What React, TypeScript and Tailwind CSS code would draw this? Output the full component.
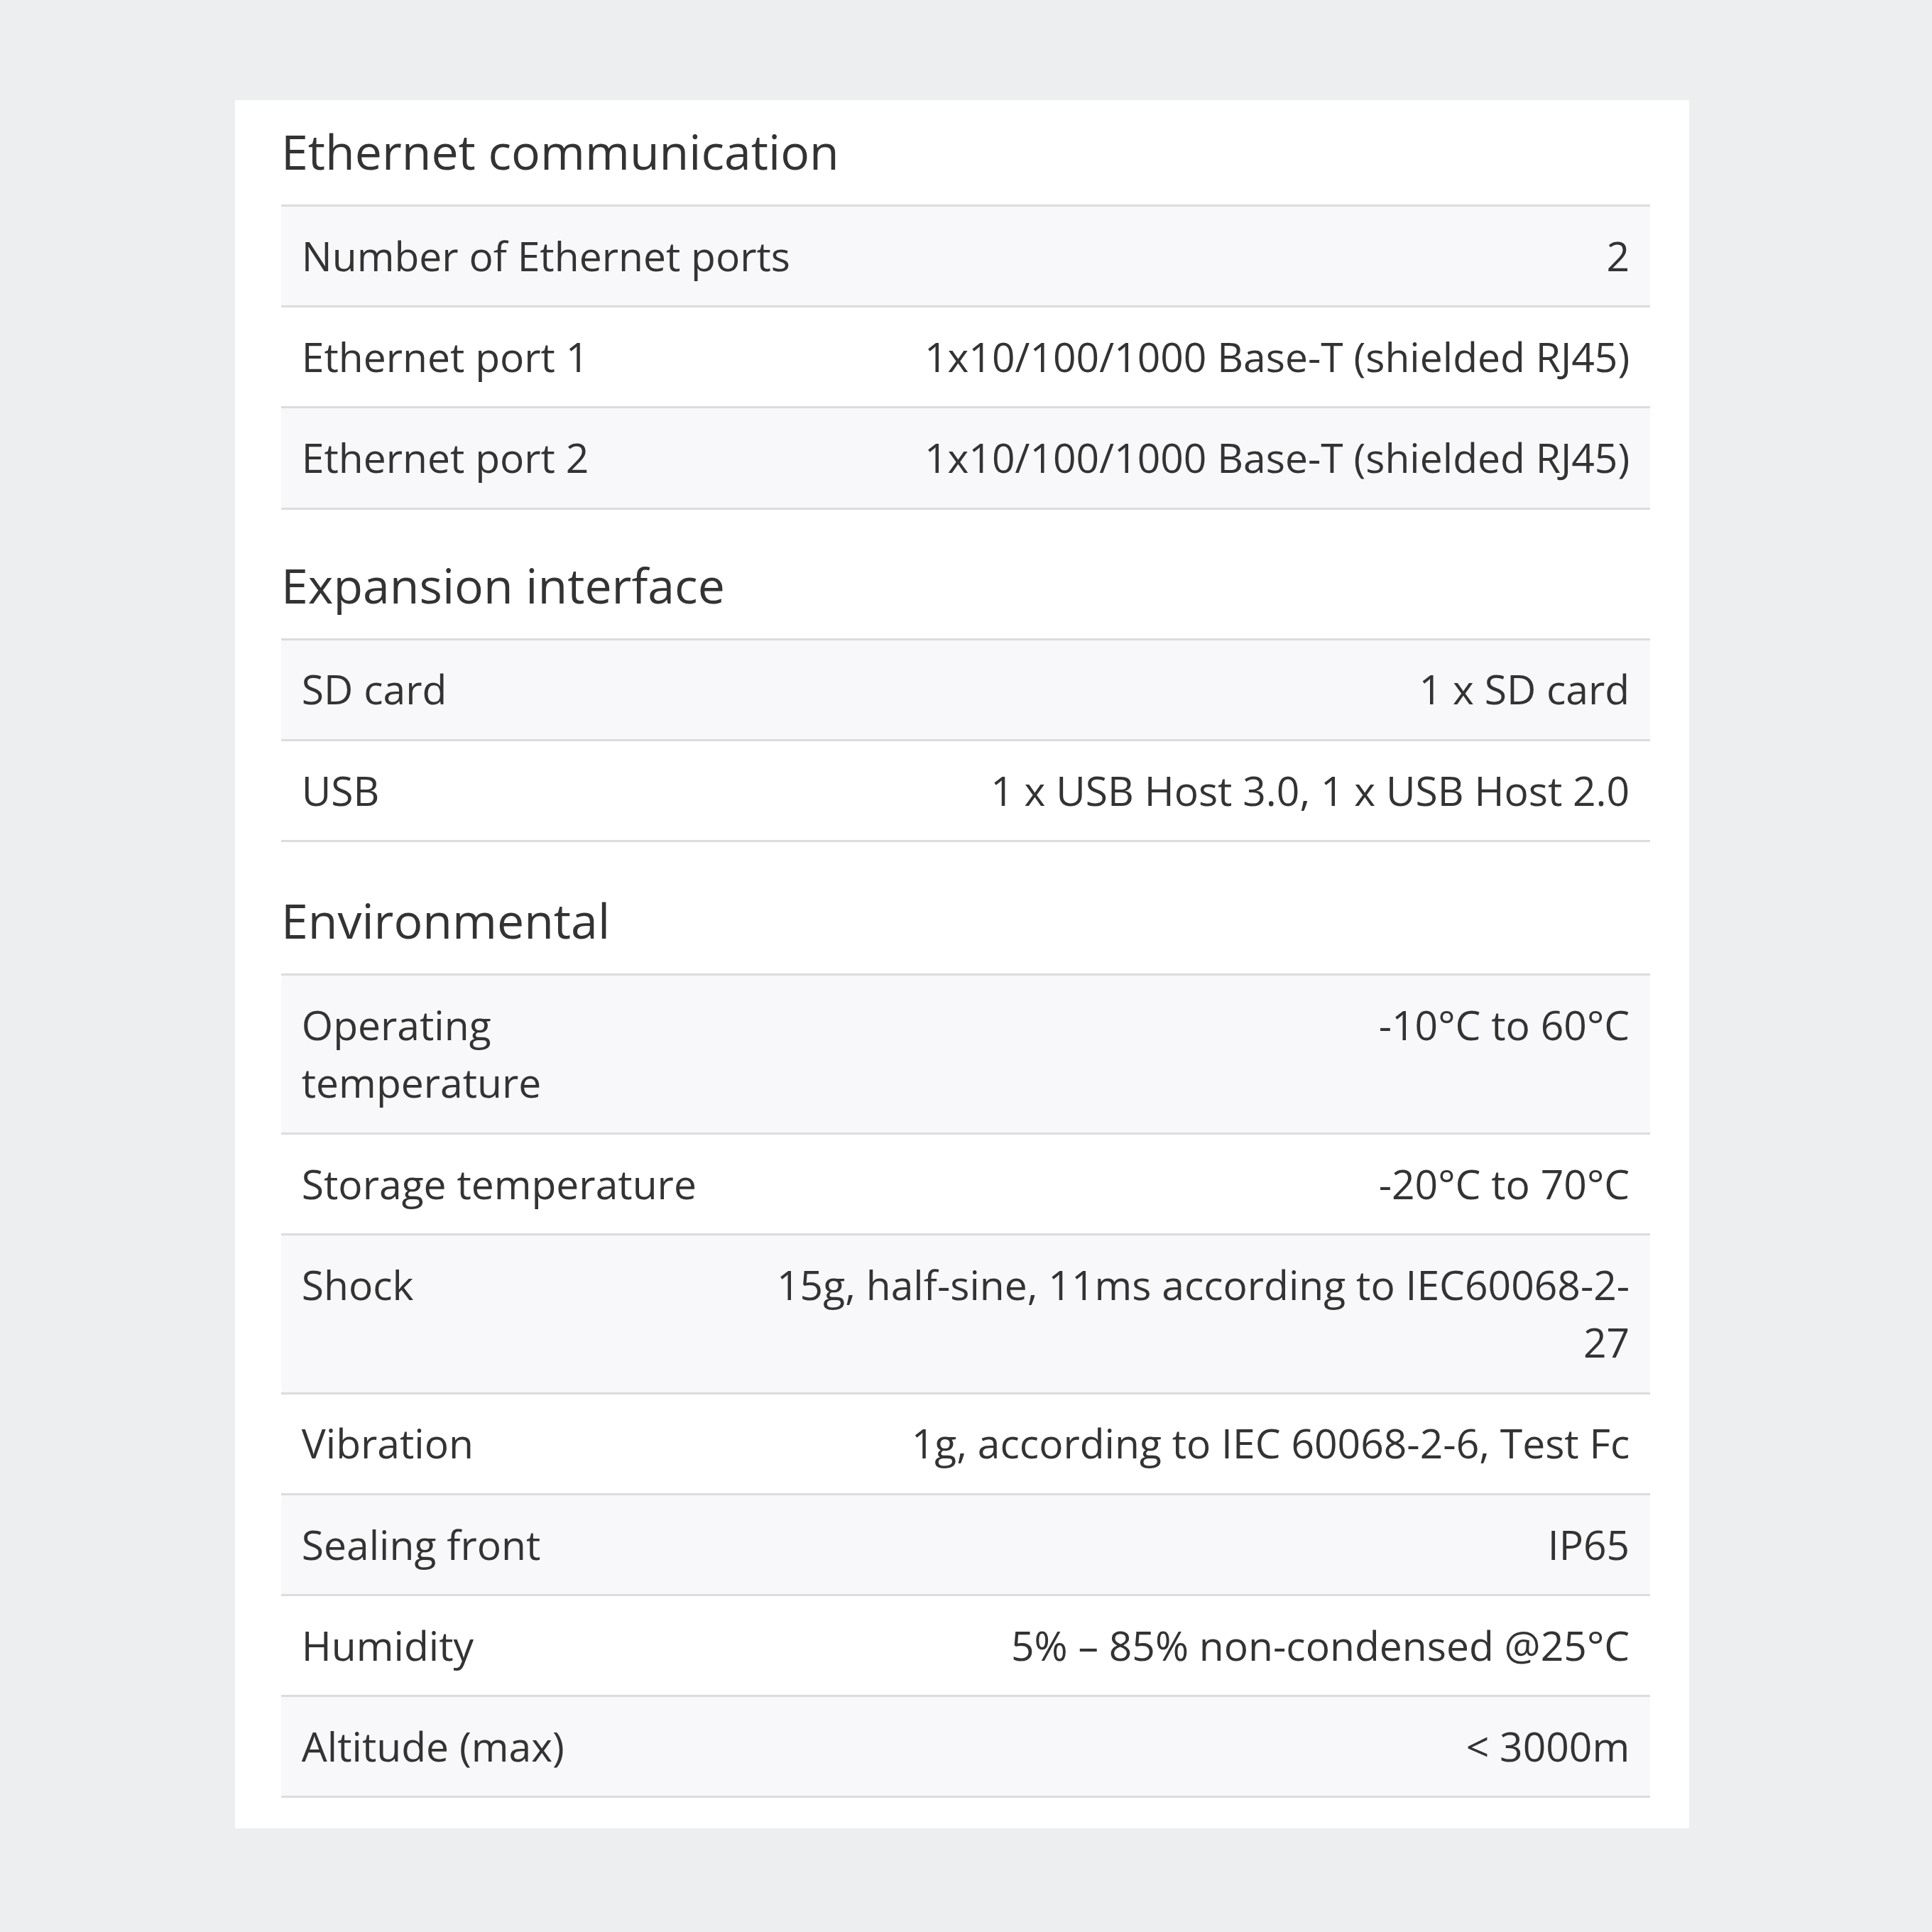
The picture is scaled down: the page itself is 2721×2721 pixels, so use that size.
import { Fragment } from 'react';

interface SpecRow {
  label: string;
  value: React.ReactNode;
}

interface SpecSection {
  title: string;
  labelWidth: string;
  spacing: string;
  rows: SpecRow[];
}

const sections: SpecSection[] = [
  {
    title: 'Ethernet communication',
    labelWidth: 'w-[760px]',
    spacing: '',
    rows: [
      { label: 'Number of Ethernet ports', value: '2' },
      { label: 'Ethernet port 1', value: '1x10/100/1000 Base-T (shielded RJ45)' },
      { label: 'Ethernet port 2', value: '1x10/100/1000 Base-T (shielded RJ45)' },
    ],
  },
  {
    title: 'Expansion interface',
    labelWidth: 'w-[760px]',
    spacing: 'mt-[66px]',
    rows: [
      { label: 'SD card', value: '1 x SD card' },
      { label: 'USB', value: '1 x USB Host 3.0, 1 x USB Host 2.0' },
    ],
  },
  {
    title: 'Environmental',
    labelWidth: 'w-[633px]',
    spacing: 'mt-[70px]',
    rows: [
      { label: 'Operating temperature', value: '-10°C to 60°C' },
      { label: 'Storage temperature', value: '-20°C to 70°C' },
      {
        label: 'Shock',
        value: (
          <Fragment>
            15g, half-sine, 11ms according to IEC60068-2-<wbr />27
          </Fragment>
        ),
      },
      { label: 'Vibration', value: '1g, according to IEC 60068-2-6, Test Fc' },
      { label: 'Sealing front', value: 'IP65' },
      { label: 'Humidity', value: '5% – 85% non-condensed @25°C' },
      { label: 'Altitude (max)', value: '< 3000m' },
    ],
  },
];

function SpecTable({ rows, labelWidth }: { rows: SpecRow[]; labelWidth: string }) {
  return (
    <div className="border-b-[3px] border-[#dcdcdf]">
      {rows.map((row, i) => (
        <div
          key={row.label}
          className={`flex items-start border-t-[3px] border-[#dcdcdf] ${i % 2 === 0 ? 'bg-[#f8f8fa]' : 'bg-white'}`}
        >
          <div className={`${labelWidth} shrink-0 px-[28.8px] py-[28.8px]`}>{row.label}</div>
          <div className="min-w-0 flex-1 px-[28.8px] py-[28.8px] text-right">{row.value}</div>
        </div>
      ))}
    </div>
  );
}

export default function App() {
  return (
    <div
      className="h-[2721px] w-[2721px] bg-[#eceef0] pl-[331px] pt-[141px] text-[#333333]"
      style={{ fontFamily: '"Open Sans", "Noto Sans", sans-serif' }}
    >
      <div className="w-[2048px] bg-white pb-[43px] pl-[65px] pr-[55px] pt-[32px]">
        {sections.map((section) => (
          <section key={section.title} className={section.spacing}>
            <h2 className="mb-[35px] text-[68px] font-normal leading-[80px]">{section.title}</h2>
            <div className="text-[57px] leading-[81.6px]">
              <SpecTable rows={section.rows} labelWidth={section.labelWidth} />
            </div>
          </section>
        ))}
      </div>
    </div>
  );
}
